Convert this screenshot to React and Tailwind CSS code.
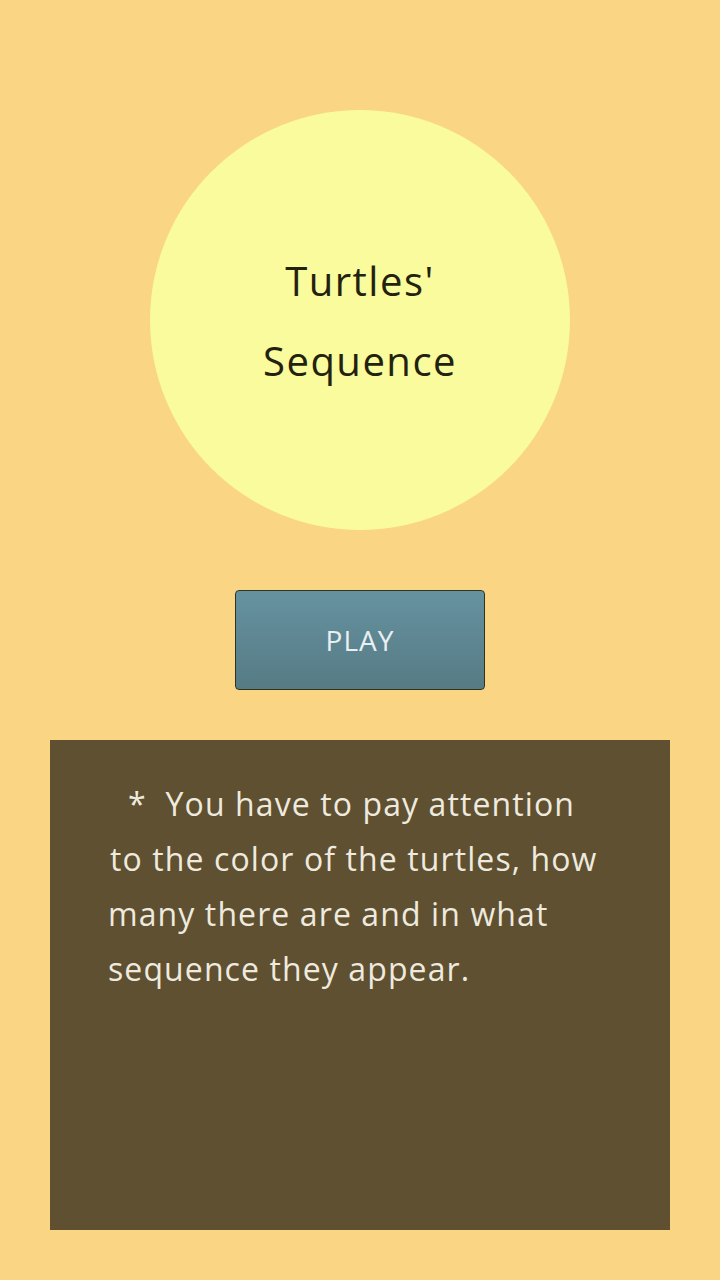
export default function App() {
  return (
    <div
      className="w-[720px] h-[1280px] bg-[#f9d584] flex flex-col items-center"
      style={{ fontFamily: "'Open Sans', Lato, sans-serif" }}
    >
      <div className="mt-[110px] w-[420px] h-[420px] rounded-full bg-[#f9fb9c] flex flex-col items-center justify-center">
        <div className="text-[40px] tracking-[1.5px] leading-[80px] text-[#22220f] text-center mt-[2px]">
          <div>Turtles'</div>
          <div>Sequence</div>
        </div>
      </div>

      <button className="mt-[60px] w-[250px] h-[100px] rounded-[4px] border border-[#2b3622] bg-gradient-to-b from-[#6692a0] to-[#567b85] text-[#e8f0f0] text-[28px] tracking-[1px]">
        PLAY
      </button>

      <div className="mt-[50px] w-[620px] h-[490px] bg-[#5e5030] pt-[36px] pl-[58px] text-[#efeadf] text-[32px] tracking-[1.1px] leading-[55px]">
        <div className="pl-[20px]">*&nbsp; You have to pay attention</div>
        <div className="pl-[2px]">to the color of the turtles, how</div>
        <div>many there are and in what</div>
        <div>sequence they appear.</div>
      </div>
    </div>
  );
}
